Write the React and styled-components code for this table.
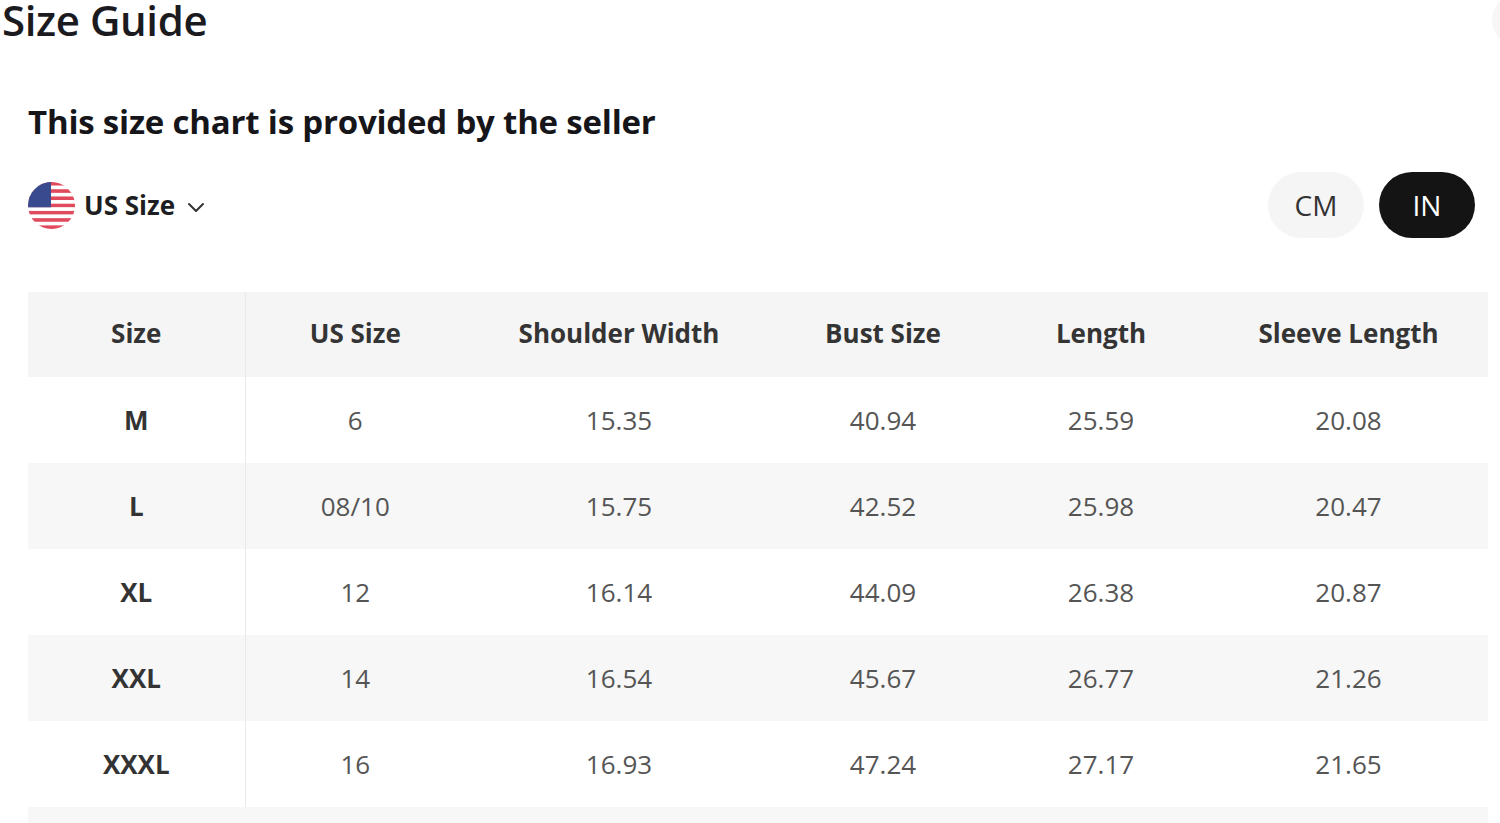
import React from "react";
import styled, { createGlobalStyle } from "styled-components";

const Global = createGlobalStyle`
  html, body { margin: 0; padding: 0; background: #fff; }
  body { font-family: "Open Sans", "Liberation Sans", sans-serif; color: #222; overflow: hidden; }
  * { box-sizing: border-box; }
`;

const Page = styled.div`
  position: relative;
  width: 1500px;
  height: 823px;
  overflow: hidden;
  background: #fff;
`;

const CloseEdge = styled.div`
  position: absolute;
  top: -6px;
  right: -44px;
  width: 52px;
  height: 52px;
  border-radius: 50%;
  background: #f6f6f6;
`;

const Title = styled.h1`
  margin: 0 0 0 2px;
  font-size: 42px;
  line-height: 40px;
  font-weight: 600;
  color: #1b1b1f;
  letter-spacing: -0.4px;
`;

const Body = styled.div`
  padding: 0 12px 0 28px;
`;

const Subtitle = styled.h2`
  margin: 63px 0 0 0;
  font-size: 33px;
  line-height: 38px;
  font-weight: 700;
  color: #16161a;
  letter-spacing: -0.2px;
`;

const ControlRow = styled.div`
  margin-top: 31px;
  height: 66px;
  display: flex;
  align-items: center;
  justify-content: space-between;
`;

const RegionSelect = styled.button`
  display: flex;
  align-items: center;
  gap: 9px;
  padding: 0;
  border: none;
  background: none;
  font-family: inherit;
  font-size: 26px;
  font-weight: 700;
  color: #1e1e22;
  cursor: pointer;
`;

const Chevron = styled.svg`
  margin-left: 3px;
  margin-top: 4px;
`;

const UnitGroup = styled.div`
  display: flex;
  gap: 15px;
  margin-right: 13px;
`;

const UnitPill = styled.button`
  height: 66px;
  min-width: 96px;
  padding: 0 26px;
  border: none;
  border-radius: 33px;
  font-family: inherit;
  font-size: 28px;
  font-weight: 400;
  background: ${(p) => (p.$active ? "#141414" : "#f5f5f5")};
  color: ${(p) => (p.$active ? "#fff" : "#333")};
  cursor: pointer;
`;

const Table = styled.table`
  margin-top: 54px;
  width: 1460px;
  border-collapse: collapse;
  table-layout: fixed;
`;

const HeadCell = styled.th`
  height: 85px;
  padding: 0 0 3px 0;
  background: #f5f5f5;
  font-size: 26px;
  font-weight: 700;
  color: #343434;
  text-align: center;
  border-right: ${(p) => (p.$first ? "1px solid #eaeaea" : "none")};
`;

const Row = styled.tr`
  background: ${(p) => (p.$shade ? "#f7f7f7" : "#fff")};
`;

const Cell = styled.td`
  height: 86px;
  padding: 0;
  font-size: 26px;
  text-align: center;
  font-weight: ${(p) => (p.$first ? 700 : 400)};
  color: ${(p) => (p.$first ? "#333" : "#555")};
  border-right: ${(p) => (p.$first ? "1px solid #eaeaea" : "none")};
`;

const columns = [
  { label: "Size", width: 217 },
  { label: "US Size", width: 220 },
  { label: "Shoulder Width", width: 308 },
  { label: "Bust Size", width: 220 },
  { label: "Length", width: 216 },
  { label: "Sleeve Length", width: 279 },
];

const rows = [
  ["M", "6", "15.35", "40.94", "25.59", "20.08"],
  ["L", "08/10", "15.75", "42.52", "25.98", "20.47"],
  ["XL", "12", "16.14", "44.09", "26.38", "20.87"],
  ["XXL", "14", "16.54", "45.67", "26.77", "21.26"],
  ["XXXL", "16", "16.93", "47.24", "27.17", "21.65"],
];

function UsFlag() {
  const stripes = [];
  for (let i = 0; i < 13; i++) {
    stripes.push(
      <rect key={i} x="0" y={i * (47 / 13)} width="47" height={47 / 13 + 0.2} fill={i % 2 === 0 ? "#e04a5c" : "#ffffff"} />
    );
  }
  return (
    <svg width="47" height="47" viewBox="0 0 47 47">
      <defs>
        <clipPath id="flagClip">
          <circle cx="23.5" cy="23.5" r="23.5" />
        </clipPath>
      </defs>
      <g clipPath="url(#flagClip)">
        {stripes}
        <rect x="0" y="0" width="23" height={(47 / 13) * 7} fill="#3a4a8e" />
      </g>
    </svg>
  );
}

export default function App() {
  return (
    <Page>
      <Global />
      <CloseEdge />
      <Title>Size Guide</Title>
      <Body>
        <Subtitle>This size chart is provided by the seller</Subtitle>
        <ControlRow>
          <RegionSelect>
            <UsFlag />
            <span>US Size</span>
            <Chevron width="18" height="12" viewBox="0 0 18 12">
              <polyline points="2,3 9,10 16,3" fill="none" stroke="#333" strokeWidth="2" strokeLinecap="round" strokeLinejoin="round" />
            </Chevron>
          </RegionSelect>
          <UnitGroup>
            <UnitPill>CM</UnitPill>
            <UnitPill $active>IN</UnitPill>
          </UnitGroup>
        </ControlRow>
        <Table>
          <colgroup>
            {columns.map((c) => (
              <col key={c.label} style={{ width: c.width }} />
            ))}
          </colgroup>
          <thead>
            <tr>
              {columns.map((c, i) => (
                <HeadCell key={c.label} $first={i === 0}>{c.label}</HeadCell>
              ))}
            </tr>
          </thead>
          <tbody>
            {rows.map((r, ri) => (
              <Row key={ri} $shade={ri % 2 === 1}>
                {r.map((v, ci) => (
                  <Cell key={ci} $first={ci === 0}>{v}</Cell>
                ))}
              </Row>
            ))}
            <Row $shade>
              <Cell colSpan={6} />
            </Row>
          </tbody>
        </Table>
      </Body>
    </Page>
  );
}
